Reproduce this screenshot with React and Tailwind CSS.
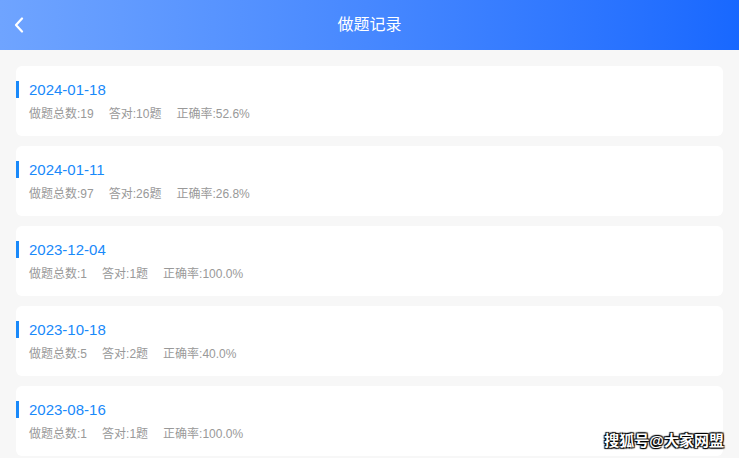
import React from "react";

const records = [
  { date: "2024-01-18", total: 19, right: 10, rate: "52.6%" },
  { date: "2024-01-11", total: 97, right: 26, rate: "26.8%" },
  { date: "2023-12-04", total: 1, right: 1, rate: "100.0%" },
  { date: "2023-10-18", total: 5, right: 2, rate: "40.0%" },
  { date: "2023-08-16", total: 1, right: 1, rate: "100.0%" },
];

const font = { fontFamily: '"Liberation Sans", "Noto Sans CJK SC", sans-serif' };

function RecordCard({ r }) {
  return (
    <div className="bg-white rounded-[6px] h-[70px] pt-[15px] shrink-0">
      <div className="border-l-[3px] border-[#1989fa] pl-[10px] h-[17px] leading-[17px] text-[15px] text-[#1989fa]">
        {r.date}
      </div>
      <div className="mt-[8px] pl-[13px] flex gap-[15px] text-[12px] leading-[16px] text-[#999999]">
        <span>做题总数:{r.total}</span>
        <span>答对:{r.right}题</span>
        <span>正确率:{r.rate}</span>
      </div>
    </div>
  );
}

export default function App() {
  return (
    <div className="relative w-[739px] h-[458px] overflow-hidden bg-[#f7f7f7]" style={font}>
      <header className="h-[50px] flex items-center justify-center relative bg-gradient-to-r from-[#6fa4ff] to-[#1868ff]">
        <button className="absolute left-[12px] top-[15px] w-[14px] h-[20px] flex items-center justify-center">
          <svg width="10" height="16" viewBox="0 0 10 16" fill="none">
            <path d="M8 1.5 L2 8 L8 14.5" stroke="white" strokeWidth="2.2" strokeLinecap="round" strokeLinejoin="round" />
          </svg>
        </button>
        <h1 className="text-white text-[16px]">做题记录</h1>
      </header>
      <main className="px-[16px] pt-[16px] flex flex-col gap-[10px]">
        {records.map((r) => (
          <RecordCard key={r.date} r={r} />
        ))}
      </main>
      <div
        className="absolute right-[15px] bottom-[8px] text-white text-[15px] font-bold leading-[18px]"
        style={{ textShadow: "1px 1px 1px #000, -1px -1px 1px #000, 1px -1px 1px #000, -1px 1px 1px #000" }}
      >
        搜狐号@大家网盟
      </div>
    </div>
  );
}
